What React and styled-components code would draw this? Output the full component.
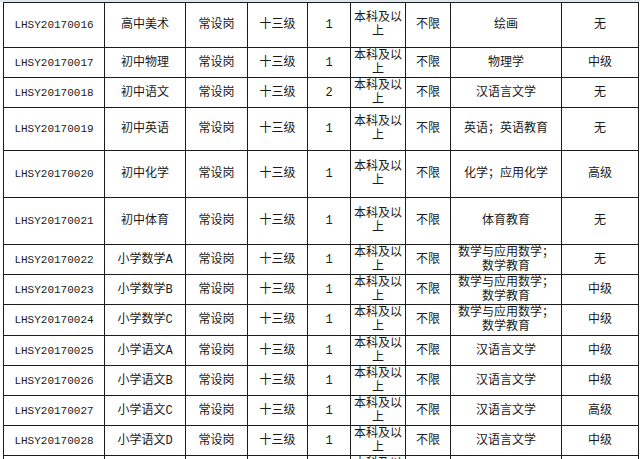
import React from "react";
import styled, { createGlobalStyle } from "styled-components";

const Global = createGlobalStyle`
  html, body { margin: 0; padding: 0; background: #ffffff; }
  body { overflow: hidden; }
`;

const Page = styled.div`
  width: 640px;
  height: 459px;
  overflow: hidden;
  background: #ffffff;
  border-top: 2px solid #dfe5ec;
  box-sizing: border-box;
  padding-left: 3px;
`;

const Grid = styled.div`
  display: grid;
  grid-template-columns: 101px 81px 62px 60px 43px 55px 45px 111px 77px;
  grid-template-rows: ${(p) => p.$rows};
  width: max-content;
  border-left: 1px solid #1c1c1c;
  border-top: 1px solid #1c1c1c;
`;

const Cell = styled.div`
  box-sizing: border-box;
  min-height: 0;
  border-right: 1px solid #1c1c1c;
  border-bottom: 1px solid #1c1c1c;
  display: flex;
  align-items: center;
  justify-content: center;
  text-align: center;
  overflow: hidden;
  padding: 0 2px;
  font-family: "Liberation Mono", "Noto Sans CJK SC", monospace;
  font-size: ${(p) => (p.$mono ? 11 : 12)}px;
  line-height: 14px;
  color: #1a1a1a;
  word-break: break-all;
`;

const rows = [
  ["LHSY20170016", "高中美术", "常设岗", "十三级", "1", "本科及以上", "不限", "绘画", "无", 45],
  ["LHSY20170017", "初中物理", "常设岗", "十三级", "1", "本科及以上", "不限", "物理学", "中级", 30],
  ["LHSY20170018", "初中语文", "常设岗", "十三级", "2", "本科及以上", "不限", "汉语言文学", "无", 30],
  ["LHSY20170019", "初中英语", "常设岗", "十三级", "1", "本科及以上", "不限", "英语；英语教育", "无", 43],
  ["LHSY20170020", "初中化学", "常设岗", "十三级", "1", "本科及以上", "不限", "化学；应用化学", "高级", 47],
  ["LHSY20170021", "初中体育", "常设岗", "十三级", "1", "本科及以上", "不限", "体育教育", "无", 47],
  ["LHSY20170022", "小学数学A", "常设岗", "十三级", "1", "本科及以上", "不限", "数学与应用数学；数学教育", "无", 30],
  ["LHSY20170023", "小学数学B", "常设岗", "十三级", "1", "本科及以上", "不限", "数学与应用数学；数学教育", "中级", 30],
  ["LHSY20170024", "小学数学C", "常设岗", "十三级", "1", "本科及以上", "不限", "数学与应用数学；数学教育", "中级", 31],
  ["LHSY20170025", "小学语文A", "常设岗", "十三级", "1", "本科及以上", "不限", "汉语言文学", "中级", 30],
  ["LHSY20170026", "小学语文B", "常设岗", "十三级", "1", "本科及以上", "不限", "汉语言文学", "中级", 30],
  ["LHSY20170027", "小学语文C", "常设岗", "十三级", "1", "本科及以上", "不限", "汉语言文学", "高级", 30],
  ["LHSY20170028", "小学语文D", "常设岗", "十三级", "1", "本科及以上", "不限", "汉语言文学", "中级", 30],
  ["", "", "", "", "", "本科及以上", "", "", "", 30],
];

const rowTemplate = rows.map((r) => `${r[9]}px`).join(" ");

export default function App() {
  return (
    <>
      <Global />
      <Page>
        <Grid $rows={rowTemplate}>
          {rows.map((r, i) =>
            r.slice(0, 9).map((v, j) => (
              <Cell key={`${i}-${j}`} $mono={j === 0}>
                {v}
              </Cell>
            ))
          )}
        </Grid>
      </Page>
    </>
  );
}
